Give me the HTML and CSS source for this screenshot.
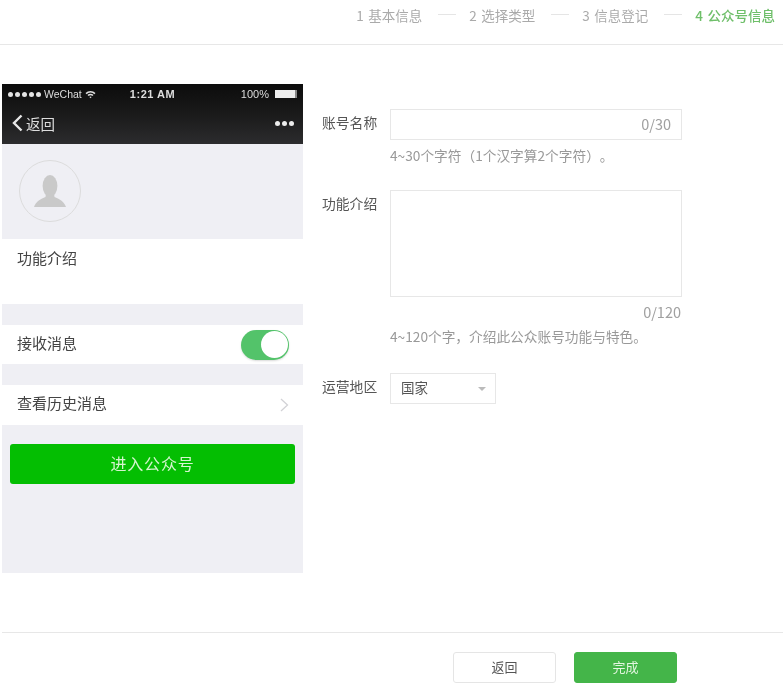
FILE: index.html
```html
<!DOCTYPE html>
<html lang="zh-CN">
<head>
    <meta charset="UTF-8">
    <meta name="viewport" content="width=device-width, initial-scale=1.0">
    <title>公众号信息</title>
    <link rel="stylesheet" href="styles.css">
</head>
<body>
    <div class="page">
        <!-- Steps -->
        <div class="steps">
            <span class="step">1 基本信息</span>
            <span class="step-line"></span>
            <span class="step">2 选择类型</span>
            <span class="step-line"></span>
            <span class="step">3 信息登记</span>
            <span class="step-line"></span>
            <span class="step step-active">4 公众号信息</span>
        </div>

        <div class="main">
            <!-- Phone preview -->
            <div class="phone">
                <div class="phone-top">
                    <div class="status-bar">
                        <div class="status-left">
                            <span class="signal"><i></i><i></i><i></i><i></i><i></i></span>
                            <span class="carrier">WeChat</span>
                            <svg class="wifi" width="11" height="9" viewBox="0 0 11 9">
                                <path d="M0.5 3 A7 7 0 0 1 10.5 3 L9.4 4.2 A5.5 5.5 0 0 0 1.6 4.2 Z" fill="#ddd"/>
                                <path d="M2.5 5 A4.2 4.2 0 0 1 8.5 5 L7.4 6.1 A2.8 2.8 0 0 0 3.6 6.1 Z" fill="#ddd"/>
                                <path d="M4.4 7 A1.6 1.6 0 0 1 6.6 7 L5.5 8.3 Z" fill="#ddd"/>
                            </svg>
                        </div>
                        <span class="status-time">1:21 AM</span>
                        <div class="status-right">
                            <span>100%</span>
                            <span class="battery"></span>
                        </div>
                    </div>
                    <div class="nav-bar">
                        <div class="nav-back">
                            <svg width="11" height="18" viewBox="0 0 11 18">
                                <path d="M9.5 1.5 L2 9 L9.5 16.5" fill="none" stroke="#e8e8e8" stroke-width="2.4"/>
                            </svg>
                            <span>返回</span>
                        </div>
                        <div class="nav-more"><i></i><i></i><i></i></div>
                    </div>
                </div>
                <div class="profile">
                    <div class="avatar">
                        <svg width="32" height="32" viewBox="0 0 32 32">
                            <ellipse cx="16" cy="11" rx="7.4" ry="11" fill="#c9c9c9"/>
                            <path d="M12 18 L20 18 L20.5 22 C25 24 30 26 32 32 L0 32 C2 26 7 24 11.5 22 Z" fill="#c9c9c9"/>
                        </svg>
                    </div>
                </div>
                <div class="cell cell-intro">功能介绍</div>
                <div class="cell cell-switch">
                    <span>接收消息</span>
                    <span class="switch"><span class="switch-knob"></span></span>
                </div>
                <div class="cell cell-history">
                    <span>查看历史消息</span>
                    <svg width="9" height="14" viewBox="0 0 9 14">
                        <path d="M1 1 L7.5 7 L1 13" fill="none" stroke="#d2d2d6" stroke-width="1.3"/>
                    </svg>
                </div>
                <div class="phone-btn">进入公众号</div>
            </div>

            <!-- Form -->
            <div class="form">
                <div class="form-row row-name">
                    <label class="form-label">账号名称</label>
                    <div class="form-field">
                        <div class="input">0/30</div>
                        <p class="hint">4~30个字符（1个汉字算2个字符）。</p>
                    </div>
                </div>
                <div class="form-row row-intro">
                    <label class="form-label">功能介绍</label>
                    <div class="form-field">
                        <div class="textarea"></div>
                        <div class="counter">0/120</div>
                        <p class="hint">4~120个字，介绍此公众账号功能与特色。</p>
                    </div>
                </div>
                <div class="form-row">
                    <label class="form-label">运营地区</label>
                    <div class="select">
                        <span class="select-text">国家</span>
                        <span class="caret"></span>
                    </div>
                </div>
            </div>
        </div>

        <!-- Footer buttons -->
        <div class="footer">
            <button class="btn">返回</button>
            <button class="btn btn-primary">完成</button>
        </div>
    </div>
</body>
</html>
```

FILE: styles.css
```css
html, body {
    margin: 0;
    background: #fff;
}
body {
    font-family: "Noto Sans CJK SC", "Liberation Sans", sans-serif;
    color: #555;
    overflow: hidden;
    text-spacing-trim: space-all;
}
.page {
    width: 783px;
    height: 685px;
    filter: blur(0.5px);
}
.steps {
    height: 29px;
    padding: 0 8px 15px 0;
    border-bottom: 1px solid #e7e7e7;
    display: flex;
    justify-content: flex-end;
    align-items: center;
    font-size: 13.5px;
    word-spacing: 1.5px;
    color: #aaa;
}
.step-line {
    width: 18px;
    height: 1px;
    margin: 0 13px 0 16px;
    background: #e5e5e5;
}
.step-active {
    color: #6fbf6a;
    font-weight: 500;
}
.main {
    display: flex;
    padding: 39px 0 0 2px;
    height: 587px;
    box-sizing: border-box;
}
.phone {
    width: 301px;
    height: 489px;
    background: #efeff4;
    font-size: 15px;
    color: #444;
}
.phone-top {
    height: 60px;
    background: linear-gradient(#0c0c0c, #1a1a1a 50%, #2c2c2e);
    color: #ddd;
}
.status-bar {
    height: 20px;
    padding: 0 6px;
    display: grid;
    grid-template-columns: 1fr auto 1fr;
    align-items: center;
    font-family: "Liberation Sans", sans-serif;
    font-size: 11px;
}
.status-left, .status-right {
    display: flex;
    align-items: center;
    gap: 3px;
}
.status-right {
    justify-content: flex-end;
    gap: 6px;
}
.carrier {
    font-size: 10.5px;
}
.status-time {
    font-weight: bold;
    letter-spacing: 0.5px;
}
.signal {
    display: flex;
    gap: 2px;
}
.signal i {
    width: 5px;
    height: 5px;
    border-radius: 50%;
    background: #e4e4e4;
}
.battery {
    width: 22px;
    height: 8px;
    background: #eee;
    border-right: 2px solid #888;
    box-sizing: border-box;
}
.nav-bar {
    height: 40px;
    display: flex;
    justify-content: space-between;
    align-items: center;
    padding: 0 9px 2px 10px;
    box-sizing: border-box;
    font-size: 14.5px;
}
.nav-back {
    display: flex;
    align-items: center;
    gap: 3px;
}
.nav-more {
    display: flex;
    gap: 2px;
}
.nav-more i {
    width: 5px;
    height: 5px;
    border-radius: 50%;
    background: #ececec;
}
.profile {
    height: 95px;
    padding: 16px 0 0 17px;
    box-sizing: border-box;
}
.avatar {
    width: 62px;
    height: 62px;
    border: 1px solid #dcdcdc;
    border-radius: 50%;
    box-sizing: border-box;
    display: flex;
    align-items: center;
    justify-content: center;
}
.cell {
    background: #fff;
    padding: 0 15px;
    display: flex;
    justify-content: space-between;
    align-items: center;
    box-sizing: border-box;
}
.cell-intro {
    height: 65px;
    align-items: flex-start;
    padding-top: 8px;
}
.cell-switch {
    height: 39px;
    margin-top: 21px;
    padding-right: 14px;
}
.cell-switch > span:first-child {
    margin-bottom: 4px;
}
.cell-history {
    height: 40px;
    margin-top: 21px;
    padding-right: 14px;
}
.cell-history > span {
    margin-bottom: 6px;
}
.switch {
    width: 48px;
    height: 30px;
    border-radius: 15px;
    background: #53c36a;
    display: flex;
    justify-content: flex-end;
    align-items: center;
    padding-right: 1px;
    box-sizing: border-box;
    box-shadow: 0 1px 2px rgba(0,0,0,0.15);
}
.switch-knob {
    width: 27px;
    height: 27px;
    border-radius: 50%;
    background: #fff;
}
.phone-btn {
    margin: 19px 8px 0;
    height: 40px;
    padding-bottom: 2px;
    box-sizing: border-box;
    border-radius: 3px;
    background: #04be02;
    color: #d6f5d0;
    font-size: 16px;
    display: flex;
    align-items: center;
    justify-content: center;
    letter-spacing: 0.8px;
}
.form {
    margin-left: 19px;
    padding-top: 25px;
    font-size: 13px;
}
.form-row {
    display: flex;
}
.row-name {
    height: 81px;
}
.row-intro {
    height: 183px;
}
.form-label {
    width: 68px;
    font-size: 13.8px;
    line-height: 26px;
    color: #555;
    white-space: nowrap;
}
.form-field {
    width: 292px;
}
.input {
    height: 31px;
    border: 1px solid #e7e7e7;
    box-sizing: border-box;
    text-align: right;
    line-height: 27px;
    padding-right: 10px;
    font-size: 14.5px;
    color: #a0a0a0;
}
.textarea {
    height: 107px;
    border: 1px solid #e7e7e7;
    box-sizing: border-box;
}
.counter {
    text-align: right;
    padding-right: 1px;
    font-size: 14.5px;
    line-height: 19px;
    margin-top: 5px;
    color: #a0a0a0;
}
.hint {
    margin: 6px 0 0;
    font-size: 13.7px;
    line-height: 19px;
    color: #999;
    white-space: nowrap;
}
.select {
    width: 106px;
    height: 31px;
    border: 1px solid #e7e7e7;
    box-sizing: border-box;
    display: flex;
    align-items: center;
    justify-content: space-between;
    padding: 0 9px 0 10px;
    font-size: 13.5px;
    color: #555;
}
.select-text {
    margin-bottom: 4px;
}
.caret {
    width: 0;
    height: 0;
    border: 4px solid transparent;
    border-top: 4px solid #bbb;
    border-bottom: 0;
}
.footer {
    margin-left: 2px;
    border-top: 1px solid #e7e7e7;
    padding: 19px 106px 0 0;
    display: flex;
    justify-content: flex-end;
    gap: 18px;
}
.btn {
    width: 103px;
    height: 31px;
    border: 1px solid #e5e5e5;
    border-radius: 3px;
    background: #fff;
    color: #555;
    font-family: inherit;
    font-size: 13px;
    padding: 0 0 2px;
}
.btn-primary {
    background: #44b549;
    border-color: #44b549;
    color: #e2f5df;
}
```
